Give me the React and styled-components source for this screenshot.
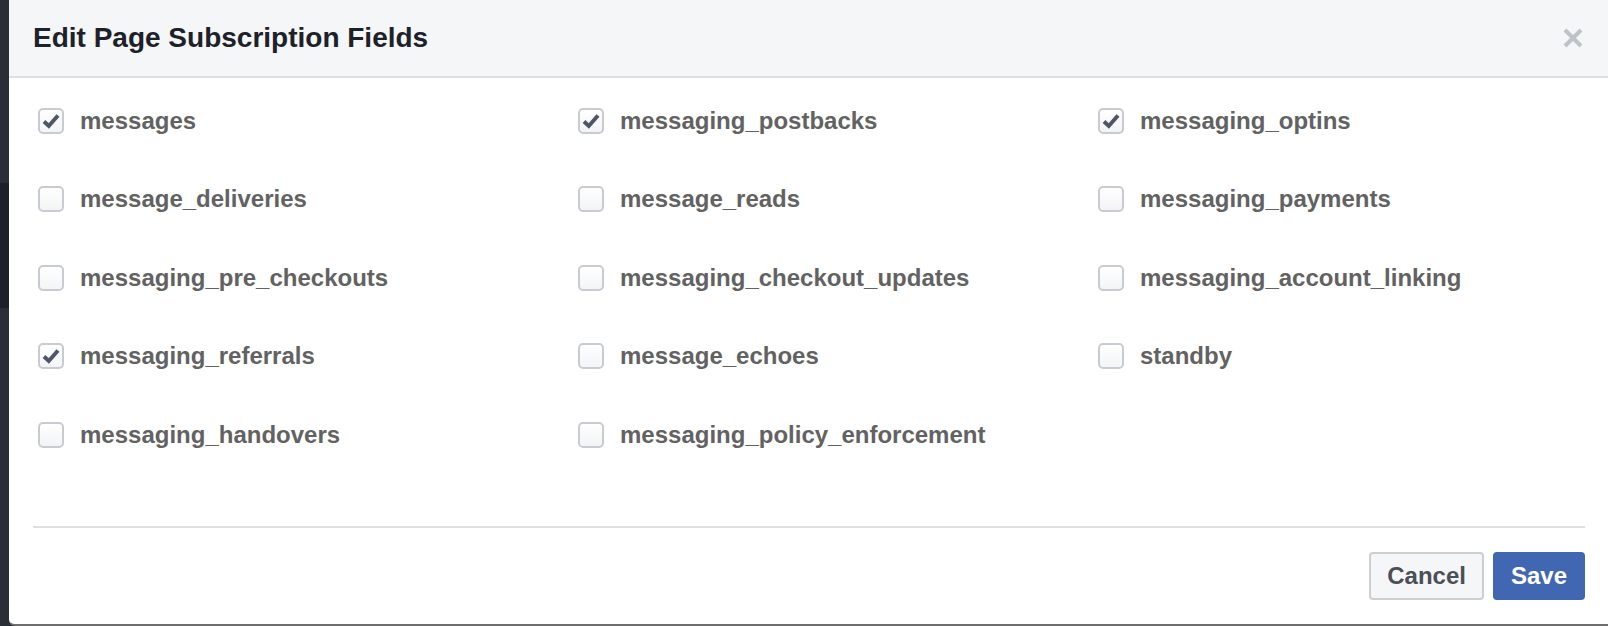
import React from 'react';
import styled, { createGlobalStyle } from 'styled-components';

const Global = createGlobalStyle`
    html, body {
        margin: 0;
        padding: 0;
        overflow: hidden;
        font-family: "Liberation Sans", Arial, Helvetica, sans-serif;
    }
    body {
        background: linear-gradient(to bottom, #2a2e36 0, #2a2e36 183px, #1c2028 183px, #1c2028 308px, #2a2e36 308px);
    }
`;

const fields = [
    { name: 'messages', checked: true },
    { name: 'messaging_postbacks', checked: true },
    { name: 'messaging_optins', checked: true },
    { name: 'message_deliveries' },
    { name: 'message_reads' },
    { name: 'messaging_payments' },
    { name: 'messaging_pre_checkouts' },
    { name: 'messaging_checkout_updates' },
    { name: 'messaging_account_linking' },
    { name: 'messaging_referrals', checked: true },
    { name: 'message_echoes' },
    { name: 'standby' },
    { name: 'messaging_handovers' },
    { name: 'messaging_policy_enforcement' },
];

const S = {
    Page: styled.div`
        display: flex;
        padding-left: 9px;
        height: 626px;
    `,
    Dialog: styled.div`
        display: flex;
        flex-flow: column;
        width: 1600px;
        flex: 0 0 1600px;
        height: 624px;
        background-color: #ffffff;
        border-bottom: 2px solid #6e6e6e;
        border-bottom-left-radius: 6px;
        overflow: hidden;
    `,
    Header: styled.div`
        display: flex;
        align-items: center;
        justify-content: space-between;
        height: 76px;
        padding: 0 26px 0 24px;
        background-color: #f5f6f7;
        border-bottom: 2px solid #dddfe2;
        & h3 {
            margin: 0;
            font-size: 28px;
            font-weight: 700;
            color: #1d2129;
        }
    `,
    Close: styled.button`
        display: flex;
        padding: 0;
        border: 0;
        background: none;
        cursor: pointer;
    `,
    Grid: styled.div`
        display: grid;
        grid-template-columns: 540px 520px 1fr;
        grid-auto-rows: 78.5px;
        padding: 4px 0 0 29px;
    `,
    Field: styled.label`
        display: flex;
        align-items: center;
        gap: 16px;
        font-size: 24px;
        font-weight: 700;
        color: #626262;
        cursor: pointer;
    `,
    Box: styled.span`
        display: flex;
        align-items: center;
        justify-content: center;
        width: 26px;
        height: 26px;
        box-sizing: border-box;
        border: 2px solid #c8ccd2;
        border-radius: 5px;
        background: linear-gradient(#ffffff, #f3f4f6);
    `,
    Divider: styled.hr`
        margin: 52px 24px 0;
        border: 0;
        border-top: 2px solid #dddfe2;
    `,
    Footer: styled.div`
        display: flex;
        justify-content: flex-end;
        gap: 9px;
        padding: 24px 24px;
    `,
    Button: styled.button`
        height: 48px;
        padding: 0 16px;
        border: 2px solid ${p => (p.$primary ? '#4267b2' : '#ccd0d5')};
        border-radius: 4px;
        background-color: ${p => (p.$primary ? '#4267b2' : '#f5f6f7')};
        color: ${p => (p.$primary ? '#ffffff' : '#4b4f56')};
        font-family: "Liberation Sans", Arial, sans-serif;
        font-size: 24px;
        font-weight: 700;
        cursor: pointer;
    `,
};

const Check = () => (
    <svg width="20" height="20" viewBox="0 0 20 20">
        <polyline points="3,10.5 7.8,15 17,4.5" fill="none" stroke="#4f5665" strokeWidth="4" strokeLinejoin="miter" />
    </svg>
);

export default function App() {
    return (
        <>
            <Global />
            <S.Page>
                <S.Dialog>
                    <S.Header>
                        <h3>Edit Page Subscription Fields</h3>
                        <S.Close aria-label="Close">
                            <svg width="20" height="20" viewBox="0 0 20 20">
                                <path d="M2 2 L18 18 M18 2 L2 18" stroke="#bec2c9" strokeWidth="4" />
                            </svg>
                        </S.Close>
                    </S.Header>
                    <S.Grid>
                        {fields.map(f => (
                            <S.Field key={f.name}>
                                <S.Box>{f.checked && <Check />}</S.Box>
                                {f.name}
                            </S.Field>
                        ))}
                    </S.Grid>
                    <S.Divider />
                    <S.Footer>
                        <S.Button>Cancel</S.Button>
                        <S.Button $primary>Save</S.Button>
                    </S.Footer>
                </S.Dialog>
            </S.Page>
        </>
    );
}
